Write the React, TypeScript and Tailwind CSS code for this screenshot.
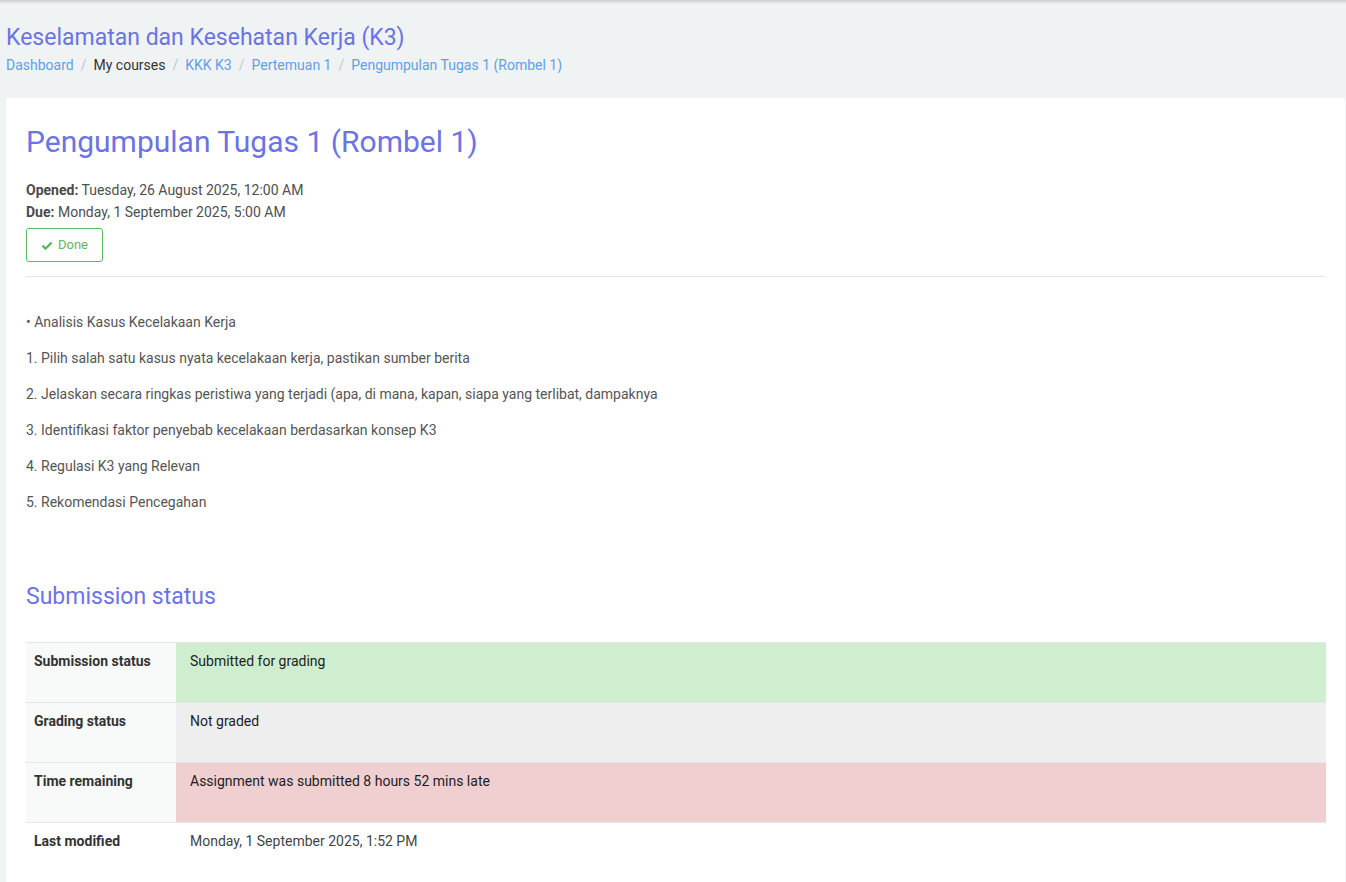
import React from "react";

const font = { fontFamily: "Roboto, 'Noto Sans', Arial, sans-serif" };

export default function App() {
  const rows = [
    { label: "Submission status", value: "Submitted for grading", bg: "bg-[#cfeecf]", lbg: "bg-[#f8fafa]" },
    { label: "Grading status", value: "Not graded", bg: "bg-[#eeeeee]", lbg: "bg-[#f8fafa]" },
    { label: "Time remaining", value: "Assignment was submitted 8 hours 52 mins late", bg: "bg-[#efcfd0]", lbg: "bg-[#f8fafa]" },
    { label: "Last modified", value: "Monday, 1 September 2025, 1:52 PM", bg: "bg-white", lbg: "bg-white", muted: true },
  ];
  const paras = [
    "\u2022 Analisis Kasus Kecelakaan Kerja",
    "1. Pilih salah satu kasus nyata kecelakaan kerja, pastikan sumber berita",
    "2. Jelaskan secara ringkas peristiwa yang terjadi (apa, di mana, kapan, siapa yang terlibat, dampaknya",
    "3. Identifikasi faktor penyebab kecelakaan berdasarkan konsep K3",
    "4. Regulasi K3 yang Relevan",
    "5. Rekomendasi Pencegahan",
  ];
  return (
    <div style={font} className="w-[1346px] h-[882px] overflow-hidden bg-[#eff3f4] text-[14px] text-[#4a4a4a]">
      <div className="h-[4px] bg-gradient-to-b from-[#c9cdd0] to-[#eff3f4]" />
      <header className="pl-[6px] pt-[21px] h-[94px]">
        <h1 className="text-[23px] leading-[26px] text-[#6b74e2] font-normal">
          Keselamatan dan Kesehatan Kerja (K3)
        </h1>
        <nav className="mt-[4px] flex items-center text-[14px] leading-[20px]">
          <span className="text-[#5fa0e8]">Dashboard</span>
          <span className="mx-[7px] text-[#c3c7cb]">/</span>
          <span className="text-[#333]">My courses</span>
          <span className="mx-[7px] text-[#c3c7cb]">/</span>
          <span className="text-[#5fa0e8]">KKK K3</span>
          <span className="mx-[7px] text-[#c3c7cb]">/</span>
          <span className="text-[#5fa0e8]">Pertemuan 1</span>
          <span className="mx-[7px] text-[#c3c7cb]">/</span>
          <span className="text-[#5fa0e8]">Pengumpulan Tugas 1 (Rombel 1)</span>
        </nav>
      </header>
      <main className="ml-[6px] w-[1339px] bg-white rounded-tr-[3px] px-[20px] pt-[24px] h-[800px]">
        <h2 className="text-[30px] leading-[40px] text-[#6b74e2] font-normal">
          Pengumpulan Tugas 1 (Rombel 1)
        </h2>
        <div className="mt-[17px] leading-[22px] text-[#4f4f4f]">
          <div><b className="font-bold text-[#4a4a4a]">Opened:</b> Tuesday, 26 August 2025, 12:00 AM</div>
          <div><b className="font-bold text-[#4a4a4a]">Due:</b> Monday, 1 September 2025, 5:00 AM</div>
        </div>
        <div className="mt-[5px] inline-flex items-center gap-[5px] h-[34px] w-[77px] justify-center border border-[#5cb85c] rounded-[3px] text-[13px] text-[#5cb85c]">
          <svg width="12" height="10" viewBox="0 0 12 10" className="mt-[1px]">
            <path d="M0.6 5.4 L2.3 3.7 L4.5 5.9 L9.7 0.7 L11.4 2.4 L4.5 9.3 Z" fill="#5cb85c" />
          </svg>
          Done
        </div>
        <hr className="mt-[14px] border-0 border-t border-[#e3e6e9]" />
        <div className="mt-[35px] text-[#555]">
          {paras.map((p, i) => (
            <p key={i} className="leading-[20px] mb-[16px]">{p}</p>
          ))}
        </div>
        <h3 className="mt-[70px] text-[23px] leading-[30px] text-[#6b74e2] font-normal">Submission status</h3>
        <table className="mt-[30px] w-[1300px] border-collapse">
          <tbody>
            {rows.map((r, i) => (
              <tr key={i} className="border-t border-[#e3e6e9]">
                <th className={`w-[150px] h-[60px] align-top text-left pl-[8px] pt-[8px] font-bold text-[#333] ${r.lbg} leading-[20px]`}>
                  {r.label}
                </th>
                <td className={`${r.bg} align-top pl-[14px] pt-[8px] leading-[20px] ${r.muted ? "text-[#444]" : "text-[#1d1d1d]"}`}>
                  {r.value}
                </td>
              </tr>
            ))}
          </tbody>
        </table>
      </main>
    </div>
  );
}
